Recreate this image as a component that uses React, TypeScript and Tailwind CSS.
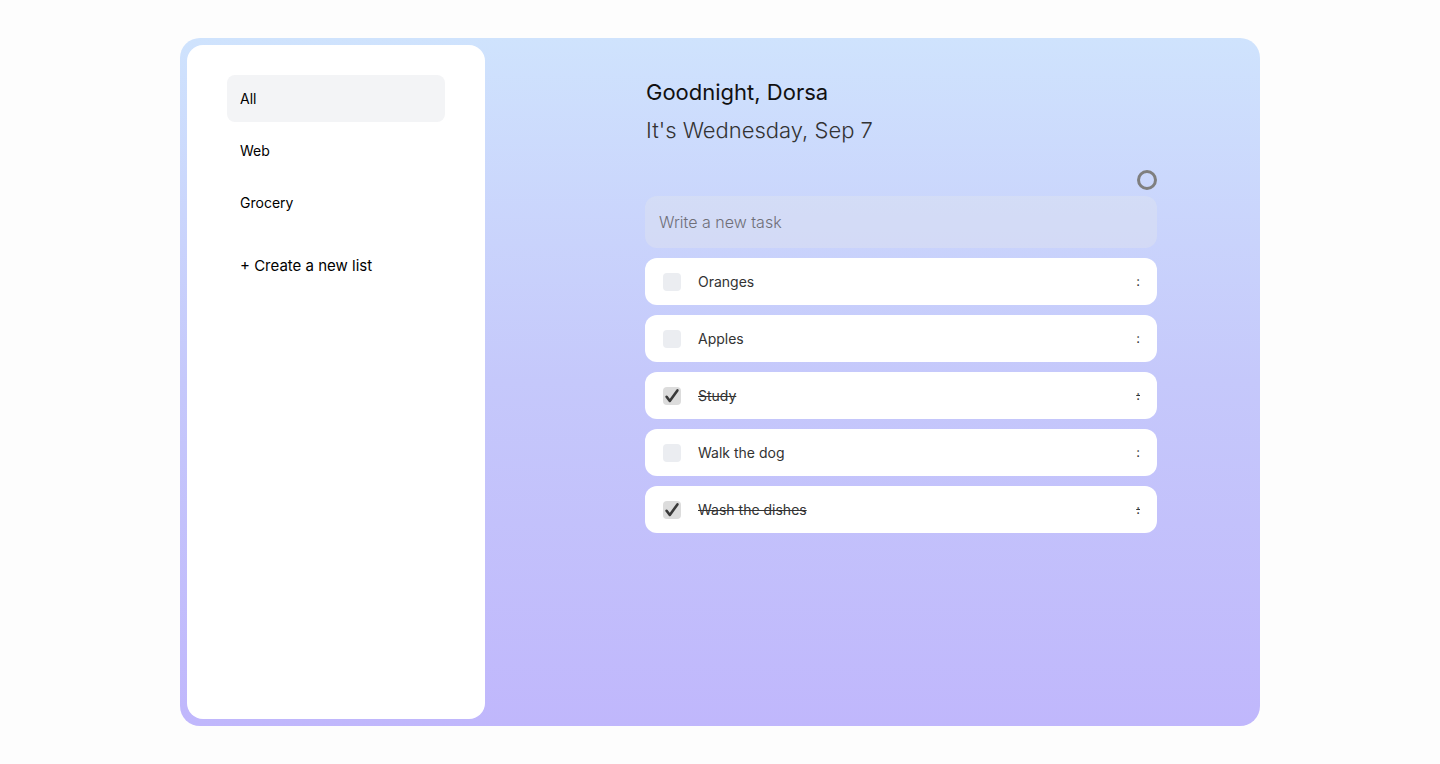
import React from "react";

const lists = ["All", "Web", "Grocery"];

const tasks = [
  { title: "Oranges", done: false },
  { title: "Apples", done: false },
  { title: "Study", done: true },
  { title: "Walk the dog", done: false },
  { title: "Wash the dishes", done: true },
];

function TaskRow({ title, done }: { title: string; done: boolean }) {
  return (
    <div
      className={`flex h-[47px] items-center rounded-xl bg-white pl-[18px] pr-[17px] text-[14px] text-[#333] ${
        done ? "line-through" : ""
      }`}
    >
      <span
        className={`flex h-[18px] w-[18px] shrink-0 items-center justify-center rounded-[4px] ${
          done ? "bg-[#dcdcdc]" : "bg-[#ebedf1]"
        }`}
      >
        {done && (
          <svg width="16" height="16" viewBox="0 0 16 16">
            <path
              d="M2.6 8.8 L5.8 13 L13.4 2.4"
              fill="none"
              stroke="#3a3a3a"
              strokeWidth="2.6"
              strokeLinecap="round"
              strokeLinejoin="round"
            />
          </svg>
        )}
      </span>
      <span className="ml-[17px] flex-1">{title}</span>
      <span className="text-[13px]">:</span>
    </div>
  );
}

export default function App() {
  return (
    <main
      className="flex min-h-[764px] w-full justify-center bg-[#fdfdfd] pt-[38px]"
      style={{ fontFamily: "Inter, 'Noto Sans', sans-serif" }}
    >
      <div className="flex h-[688px] w-[1080px] rounded-[20px] bg-gradient-to-b from-[#cfe3fd] via-[#c5c8fb] to-[#c0b7fc] p-[7px]">
        <aside className="flex w-[298px] flex-col rounded-2xl bg-white px-10 pt-[30px]">
          {lists.map((name, i) => (
            <div
              key={name}
              className={`flex h-[47px] w-[218px] items-center rounded-lg px-[13px] text-[14px] text-black ${
                i === 0 ? "bg-[#f3f4f6]" : ""
              } ${i > 0 ? "mt-[5px]" : ""}`}
            >
              {name}
            </div>
          ))}
          <button className="mt-[17px] flex h-[47px] items-center px-[13px] text-left text-[15px] text-black">
            + Create a new list
          </button>
        </aside>

        <section className="flex flex-1 flex-col pl-[160px] pt-[26px]">
          <div className="flex w-[512px] flex-col">
            <h1 className="pl-px text-[22px] font-normal leading-[42px] text-[#111]">
              Goodnight, Dorsa
            </h1>
            <p className="pl-px text-[22px] font-light leading-[34px] text-[#333]">
              It's Wednesday, Sep 7
            </p>
            <div className="mt-[23px] flex justify-end">
              <span className="h-5 w-5 rounded-full border-[3px] border-[#7f7f7f]" />
            </div>
            <input
              placeholder="Write a new task"
              className="mt-[6px] h-[52px] w-full rounded-xl bg-[#e5e7eb]/35 px-[14px] text-[16px] font-light text-[#333] outline-none placeholder:text-[#6f6f78]"
            />
            <div className="mt-[10px] flex flex-col gap-[10px]">
              {tasks.map((t) => (
                <TaskRow key={t.title} title={t.title} done={t.done} />
              ))}
            </div>
          </div>
        </section>
      </div>
    </main>
  );
}
